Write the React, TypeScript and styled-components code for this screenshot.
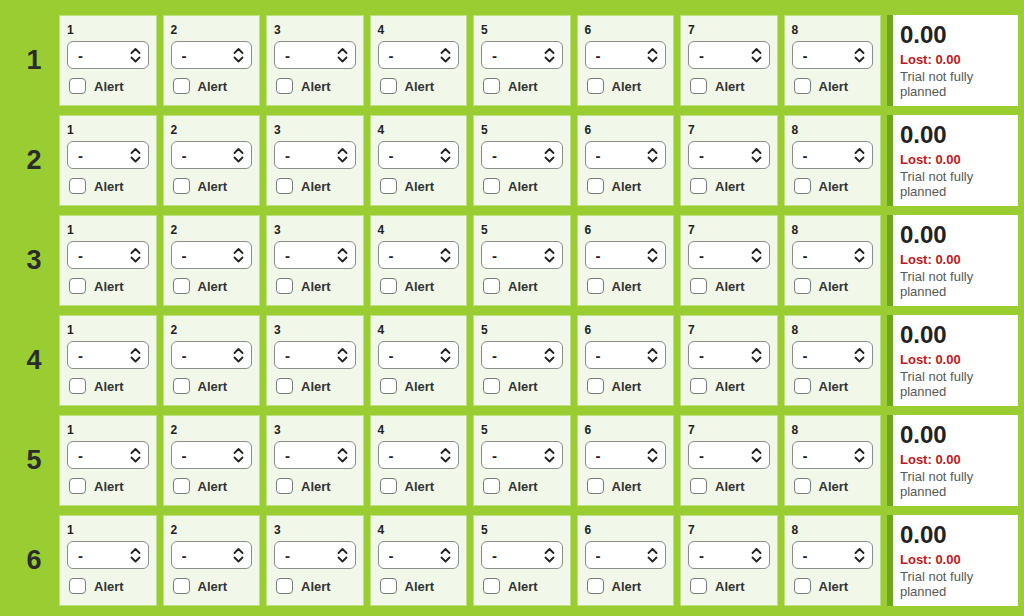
import React from "react";
import styled, { createGlobalStyle } from "styled-components";

const GlobalStyle = createGlobalStyle`
    html, body {
        margin: 0;
        padding: 0;
        background: #9acd32;
        overflow: hidden;
    }
    body {
        font-family: "Liberation Sans", Arial, Helvetica, sans-serif;
        color: #222;
    }
`;

const TRIALS = [1, 2, 3, 4, 5, 6];
const SLOTS = [1, 2, 3, 4, 5, 6, 7, 8];

const Chevrons = () => (
    <svg width="11" height="16" viewBox="0 0 11 16" fill="none">
        <polyline points="1.5,6 5.5,2 9.5,6" stroke="#222" strokeWidth="1.8" strokeLinecap="round" strokeLinejoin="round" />
        <polyline points="1.5,10.5 5.5,14.5 9.5,10.5" stroke="#222" strokeWidth="1.8" strokeLinecap="round" strokeLinejoin="round" />
    </svg>
);

interface SlotProps {
    index: number;
}

const SlotCell = ({ index }: SlotProps) => (
    <Cell>
        <SlotLabel>{index}</SlotLabel>
        <SelectWrap>
            <Select defaultValue="-">
                <option value="-">-</option>
                <option value="A">A</option>
                <option value="B">B</option>
            </Select>
            <ChevronBox>
                <Chevrons />
            </ChevronBox>
        </SelectWrap>
        <AlertRow>
            <Checkbox type="checkbox" />
            <span>Alert</span>
        </AlertRow>
    </Cell>
);

const App = () => {
    return (
        <>
            <GlobalStyle />
            <Board>
                {TRIALS.map((trial) => (
                    <React.Fragment key={trial}>
                        <TrialNumber>{trial}</TrialNumber>
                        {SLOTS.map((slot) => (
                            <SlotCell key={slot} index={slot} />
                        ))}
                        <Summary>
                            <Total>0.00</Total>
                            <Lost>Lost: 0.00</Lost>
                            <Status>Trial not fully planned</Status>
                        </Summary>
                    </React.Fragment>
                ))}
            </Board>
        </>
    );
};

export default App;

const Board = styled.div`
    display: grid;
    grid-template-columns: 38px repeat(8, 97.5px) 131px;
    grid-auto-rows: 91px;
    column-gap: 6px;
    row-gap: 9px;
    padding: 15px 0 10px 15px;
`;

const TrialNumber = styled.div`
    display: flex;
    align-items: center;
    justify-content: center;
    font-size: 27px;
    font-weight: 700;
    color: #2b2b2b;
`;

const Cell = styled.div`
    box-sizing: border-box;
    background: #f1f8e9;
    border: 1px solid #bfe082;
    padding: 7px 7px 0;
    display: flex;
    flex-direction: column;
`;

const SlotLabel = styled.div`
    font-size: 12px;
    line-height: 14px;
    font-weight: 700;
    color: #222;
`;

const SelectWrap = styled.div`
    position: relative;
    margin-top: 4px;
    height: 28px;
`;

const Select = styled.select`
    appearance: none;
    -webkit-appearance: none;
    box-sizing: border-box;
    width: 100%;
    height: 28px;
    margin: 0;
    padding: 0 20px 0 10px;
    border: 1px solid #8c8c8c;
    border-radius: 6px;
    background: #fff;
    font-family: "Liberation Sans", Arial, sans-serif;
    font-size: 15px;
    font-weight: 700;
    color: #222;
    outline: none;
`;

const ChevronBox = styled.span`
    position: absolute;
    right: 8px;
    top: 6px;
    display: flex;
    pointer-events: none;
`;

const AlertRow = styled.label`
    display: flex;
    align-items: center;
    gap: 8px;
    margin-top: 9px;
    padding-left: 2px;
    font-size: 13px;
    font-weight: 700;
    color: #333;
`;

const Checkbox = styled.input`
    appearance: none;
    -webkit-appearance: none;
    box-sizing: border-box;
    width: 17px;
    height: 16px;
    margin: 0;
    border: 1.5px solid #7a7a7a;
    border-radius: 4px;
    background: #fff;
`;

const Summary = styled.div`
    box-sizing: border-box;
    background: #fff;
    border-left: 6px solid #6ea61f;
    padding: 6px 8px 0 7px;
    display: flex;
    flex-direction: column;
`;

const Total = styled.div`
    font-size: 24px;
    font-weight: 700;
    color: #222;
`;

const Lost = styled.div`
    margin-top: 3px;
    font-size: 13px;
    line-height: 15px;
    font-weight: 700;
    color: #c0161b;
`;

const Status = styled.div`
    margin-top: 2px;
    font-size: 13px;
    line-height: 15px;
    color: #595959;
`;
